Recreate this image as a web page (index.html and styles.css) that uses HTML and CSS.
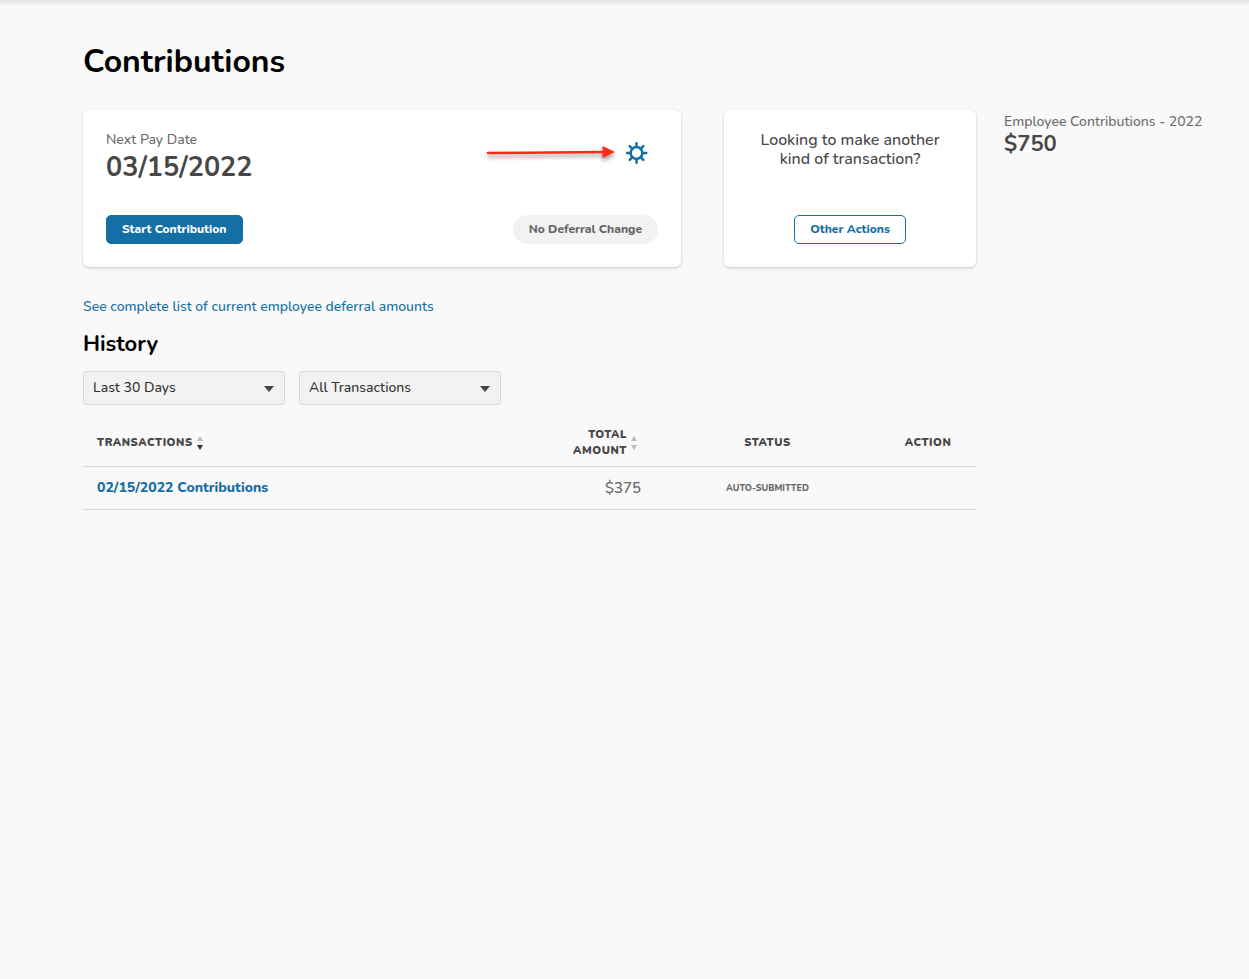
FILE: index.html
```html
<!DOCTYPE html>
<html lang="en">
<head>
  <meta charset="utf-8">
  <meta name="viewport" content="width=device-width, initial-scale=1">
  <title>Contributions</title>
  <link rel="stylesheet" href="styles.css">
</head>
<body>
  <div class="topbar-shadow"></div>
  <div class="page">
    <main class="main">
      <h1 class="page-title">Contributions</h1>
      <div class="cards">
        <section class="card pay-card">
          <div class="card-row">
            <div>
              <p class="label">Next Pay Date</p>
              <p class="pay-date">03/15/2022</p>
            </div>
            <div class="settings">
              <svg class="arrow" viewBox="0 0 132 24" aria-hidden="true">
                <path class="arrow-line" d="M2 12 L118 11"/>
                <path class="arrow-head" d="M116.500 5 L129 11 L116.500 17 Z"/>
              </svg>
              <button class="icon-button" type="button" aria-label="Settings">
                <svg class="gear" viewBox="0 0 22 22" aria-hidden="true">
                  <circle cx="10.500" cy="11" r="5.900"/>
                  <path d="M10.500 1.200V5M10.500 17V20.800M0.900 11H4.500M16.500 11H20.300M3.700 4.200L6.300 6.800M14.700 15.200L17.300 17.800M17.300 4.200L14.700 6.800M6.300 15.200L3.700 17.800"/>
                </svg>
              </button>
            </div>
          </div>
          <div class="card-row">
            <button class="button primary" type="button">Start Contribution</button>
            <span class="pill">No Deferral Change</span>
          </div>
        </section>
        <section class="card other-card">
          <p class="question">Looking to make another kind of transaction?</p>
          <button class="button outline" type="button">Other Actions</button>
        </section>
      </div>

      <a class="list-link" href="#">See complete list of current employee deferral amounts</a>

      <h2 class="section-title">History</h2>
      <div class="filters">
        <div class="select-wrap">
          <select class="select" aria-label="Period"><option>Last 30 Days</option></select>
          <svg class="caret" viewBox="0 0 10 6" aria-hidden="true"><path d="M0 0H10L5 6Z"/></svg>
        </div>
        <div class="select-wrap">
          <select class="select" aria-label="Transaction type"><option>All Transactions</option></select>
          <svg class="caret" viewBox="0 0 10 6" aria-hidden="true"><path d="M0 0H10L5 6Z"/></svg>
        </div>
      </div>

      <table class="history">
        <colgroup>
          <col>
          <col class="col-amount">
          <col class="col-status">
          <col class="col-action">
        </colgroup>
        <thead>
          <tr>
            <th scope="col">
              <span class="sortable">Transactions
                <svg class="sort" viewBox="0 0 6 14" aria-hidden="true"><path class="off" d="M3 0L6 5H0Z"/><path class="on" d="M0 9H6L3 14Z"/></svg>
              </span>
            </th>
            <th scope="col" class="amount">
              <span class="sortable">Total Amount
                <svg class="sort" viewBox="0 0 6 14" aria-hidden="true"><path class="off" d="M3 0L6 5H0Z"/><path class="off" d="M0 9H6L3 14Z"/></svg>
              </span>
            </th>
            <th scope="col" class="center">Status</th>
            <th scope="col" class="center">Action</th>
          </tr>
        </thead>
        <tbody>
          <tr>
            <td><a class="row-link" href="#">02/15/2022 Contributions</a></td>
            <td class="amount">$375</td>
            <td class="center status">Auto-Submitted</td>
            <td></td>
          </tr>
        </tbody>
      </table>
    </main>
    <aside class="summary">
      <p class="label">Employee Contributions - 2022</p>
      <p class="total">$750</p>
    </aside>
  </div>
</body>
</html>
```
FILE: styles.css
```css
* {
  box-sizing: border-box;
}

body {
  margin: 0;
  background: #f9f9f9;
  color: #474747;
  font-family: Nunito, "Open Sans", sans-serif;
  font-size: 14px;
  font-weight: 500;
  line-height: 20px;
}

h1, h2, p {
  margin: 0;
}

a {
  color: #136fa6;
  text-decoration: none;
}

.topbar-shadow {
  height: 6px;
  background: linear-gradient(#e2e2e2, #f9f9f9);
}

.page {
  display: grid;
  grid-template-columns: minmax(0, 1fr) 217px;
  gap: 28px;
  padding: 34px 28px 32px 83px;
}

.page-title {
  color: #000;
  font-size: 32px;
  font-weight: 700;
  line-height: 44px;
  margin-bottom: 26px;
}

.cards {
  display: grid;
  grid-template-columns: minmax(0, 1fr) 252px;
  gap: 43px;
}

.card {
  display: flex;
  flex-direction: column;
  justify-content: space-between;
  min-height: 157px;
  padding: 21px 23px 23px;
  background: #fff;
  border-radius: 6px;
  box-shadow: 0 1px 3px rgba(0, 0, 0, 0.2);
}

.card-row {
  display: flex;
  justify-content: space-between;
  align-items: center;
}

.label {
  color: #6b6b6b;
  line-height: 18px;
}

.pay-date {
  font-size: 27px;
  font-weight: 700;
  line-height: 38px;
}

.settings {
  display: flex;
  align-items: center;
  gap: 8px;
  padding: 0 10px 12px 0;
}

.arrow {
  width: 132px;
  height: 24px;
  overflow: visible;
  filter: drop-shadow(0 3px 2px rgba(0, 0, 0, 0.4));
}

.arrow-line {
  stroke: #ff2a1a;
  stroke-width: 2.5;
  stroke-linecap: round;
}

.arrow-head {
  fill: #ff2a1a;
}

.icon-button {
  display: flex;
  padding: 0;
  border: 0;
  background: none;
  cursor: pointer;
}

.gear {
  width: 22px;
  height: 22px;
  fill: none;
  stroke: #136fa6;
  stroke-width: 2.5;
  stroke-linecap: round;
}

.button {
  height: 29px;
  padding: 0 15px 2px;
  border: 1px solid #136fa6;
  border-radius: 5px;
  font: inherit;
  font-size: 12px;
  font-weight: 800;
  line-height: 16px;
  cursor: pointer;
}

.primary {
  background: #136fa6;
  color: #fff;
}

.outline {
  background: #fff;
  color: #136fa6;
}

.pill {
  padding: 6px 16px 7px;
  border-radius: 15px;
  background: #f2f2f2;
  color: #666;
  font-size: 12px;
  font-weight: 800;
  line-height: 16px;
}

.other-card {
  align-items: center;
  text-align: center;
}

.question {
  font-size: 16px;
  line-height: 19px;
}

.list-link {
  display: block;
  margin-top: 30px;
}

.section-title {
  margin-top: 12px;
  color: #000;
  font-size: 22px;
  font-weight: 700;
  line-height: 30px;
}

.filters {
  display: flex;
  gap: 14px;
  margin-top: 12px;
}

.select-wrap {
  position: relative;
  width: 202px;
}

.select {
  width: 100%;
  height: 34px;
  padding: 0 28px 0 9px;
  border: 1px solid #d8d8d8;
  border-radius: 3px;
  background: #f2f2f2;
  color: #333;
  font: inherit;
  appearance: none;
}

.caret {
  position: absolute;
  top: 15px;
  right: 11px;
  width: 10px;
  height: 6px;
  fill: #444;
  pointer-events: none;
}

.history {
  width: 100%;
  margin-top: 14px;
  border-collapse: collapse;
  table-layout: fixed;
}

.col-amount {
  width: 98px;
}

.col-status {
  width: 225px;
}

.col-action {
  width: 96px;
}

.history th,
.history td {
  border-bottom: 1px solid #d8d8d8;
  text-align: left;
}

.history th {
  height: 47px;
  padding: 2px 14px 0;
  font-size: 11px;
  font-weight: 900;
  letter-spacing: 0.05em;
  line-height: 16px;
  text-transform: uppercase;
}

.history td {
  height: 43px;
  padding: 1px 14px 0;
  color: #666;
}

.history .amount {
  text-align: right;
}

.history td.amount {
  font-size: 15px;
}

.history .center {
  text-align: center;
}

.history .status {
  font-size: 9px;
  font-weight: 800;
  text-transform: uppercase;
}

.sortable {
  display: inline-flex;
  align-items: center;
  gap: 4px;
}

.amount .sortable {
  padding-right: 4px;
}

.sort {
  flex: none;
  width: 6px;
  height: 14px;
}

.off {
  fill: #bbb;
}

.on {
  fill: #333;
}

.row-link {
  font-weight: 800;
}

.summary {
  padding-top: 73px;
}

.total {
  font-size: 22px;
  font-weight: 700;
  line-height: 26px;
}
```
